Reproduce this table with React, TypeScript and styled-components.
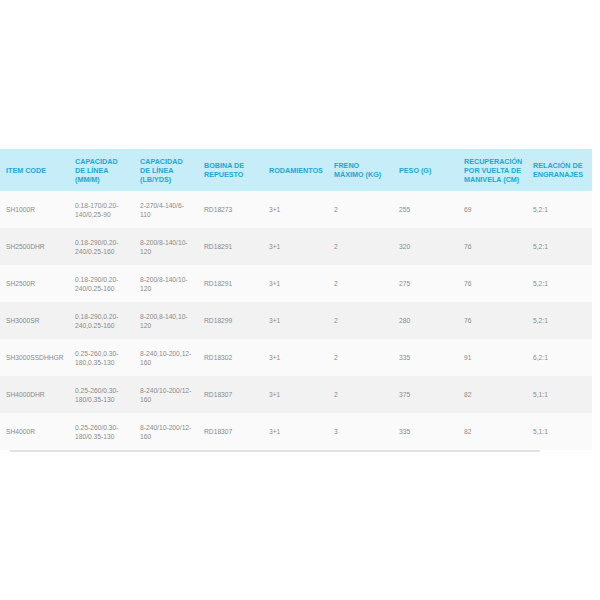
import React from "react";
import styled, { createGlobalStyle } from "styled-components";

const Global = createGlobalStyle`
  html, body { margin: 0; padding: 0; background: #ffffff; }
  body { font-family: "Liberation Sans", Arial, sans-serif; }
`;

const Page = styled.div`
  width: 600px;
  height: 600px;
  padding-top: 149px;
  box-sizing: border-box;
  background: #ffffff;
`;

const Table = styled.table`
  width: 592px;
  table-layout: fixed;
  border-collapse: collapse;
  border-spacing: 0;
`;

const HeadCell = styled.th`
  height: 42px;
  padding: 0 4px 0 6px;
  background: #c7edf9;
  color: #22a6d6;
  font-size: 7.2px;
  line-height: 9px;
  font-weight: 700;
  text-align: left;
  vertical-align: middle;
  white-space: nowrap;
  text-transform: uppercase;
`;

const Row = styled.tr<{ $alt: boolean }>`
  background: ${(p) => (p.$alt ? "#f2f2f2" : "#fafafa")};
`;

const Cell = styled.td`
  height: 37px;
  padding: 0 4px 0 6px;
  color: #8a8a8a;
  font-size: 6.7px;
  line-height: 9px;
  text-align: left;
  vertical-align: middle;
  white-space: nowrap;
`;

const BottomLine = styled.div`
  margin-left: 10px;
  width: 530px;
  height: 2px;
  background: #e2e2e2;
`;

const widths = [69, 65, 64, 65, 65, 65, 65, 69, 65];

const headers: string[][] = [
  ["ITEM CODE"],
  ["CAPACIDAD", "DE LÍNEA", "(MM/M)"],
  ["CAPACIDAD", "DE LÍNEA", "(LB/YDS)"],
  ["BOBINA DE", "REPUESTO"],
  ["RODAMIENTOS"],
  ["FRENO", "MÁXIMO (KG)"],
  ["PESO (G)"],
  ["RECUPERACIÓN", "POR VUELTA DE", "MANIVELA (CM)"],
  ["RELACIÓN DE", "ENGRANAJES"],
];

const rows: string[][][] = [
  [["SH1000R"], ["0.18-170/0.20-", "140/0.25-90"], ["2-270/4-140/6-", "110"], ["RD18273"], ["3+1"], ["2"], ["255"], ["69"], ["5,2:1"]],
  [["SH2500DHR"], ["0.18-290/0.20-", "240/0.25-160"], ["8-200/8-140/10-", "120"], ["RD18291"], ["3+1"], ["2"], ["320"], ["76"], ["5,2:1"]],
  [["SH2500R"], ["0.18-290/0.20-", "240/0.25-160"], ["8-200/8-140/10-", "120"], ["RD18291"], ["3+1"], ["2"], ["275"], ["76"], ["5,2:1"]],
  [["SH3000SR"], ["0.18-290,0.20-", "240,0.25-160"], ["8-200,8-140,10-", "120"], ["RD18299"], ["3+1"], ["2"], ["280"], ["76"], ["5,2:1"]],
  [["SH3000SSDHHGR"], ["0.25-260,0.30-", "180,0.35-130"], ["8-240,10-200,12-", "160"], ["RD18302"], ["3+1"], ["2"], ["335"], ["91"], ["6,2:1"]],
  [["SH4000DHR"], ["0.25-260/0.30-", "180/0.35-130"], ["8-240/10-200/12-", "160"], ["RD18307"], ["3+1"], ["2"], ["375"], ["82"], ["5,1:1"]],
  [["SH4000R"], ["0.25-260/0.30-", "180/0.35-130"], ["8-240/10-200/12-", "160"], ["RD18307"], ["3+1"], ["3"], ["335"], ["82"], ["5,1:1"]],
];

const Lines: React.FC<{ lines: string[] }> = ({ lines }) => (
  <>
    {lines.map((l, i) => (
      <React.Fragment key={i}>
        {i > 0 && <br />}
        {l}
      </React.Fragment>
    ))}
  </>
);

export default function App() {
  return (
    <>
      <Global />
      <Page>
        <Table>
          <colgroup>
            {widths.map((w, i) => (
              <col key={i} style={{ width: w }} />
            ))}
          </colgroup>
          <thead>
            <tr>
              {headers.map((h, i) => (
                <HeadCell key={i}>
                  <Lines lines={h} />
                </HeadCell>
              ))}
            </tr>
          </thead>
          <tbody>
            {rows.map((r, ri) => (
              <Row key={ri} $alt={ri % 2 === 1}>
                {r.map((c, ci) => (
                  <Cell key={ci}>
                    <Lines lines={c} />
                  </Cell>
                ))}
              </Row>
            ))}
          </tbody>
        </Table>
        <BottomLine />
      </Page>
    </>
  );
}
